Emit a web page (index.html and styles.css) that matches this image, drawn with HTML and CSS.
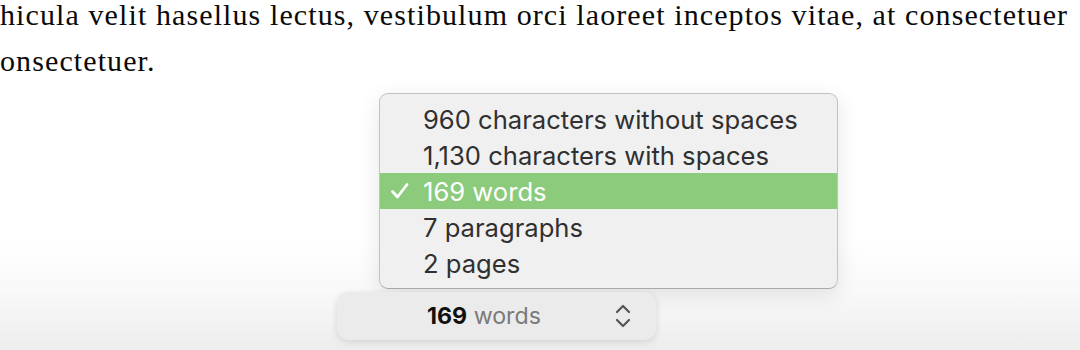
FILE: index.html
```html
<!DOCTYPE html>
<html>
<head>
<meta charset="utf-8">
<link rel="stylesheet" href="styles.css">
</head>
<body>
<div class="page">
  <div class="prose">
    <p class="line">hicula velit hasellus lectus, vestibulum orci laoreet inceptos vitae, at consectetuer</p>
    <p class="line">onsectetuer.</p>
  </div>
  <div class="popup">
    <ul class="menu">
      <li class="item">960 characters without spaces</li>
      <li class="item">1,130 characters with spaces</li>
      <li class="item selected"><svg class="check" width="20" height="18" viewBox="0 0 20 18"><path d="M2.5 9.5 L7.5 15 L17 2.5" fill="none" stroke="#fff" stroke-width="2.8" stroke-linecap="round" stroke-linejoin="round"/></svg>169 words</li>
      <li class="item">7 paragraphs</li>
      <li class="item">2 pages</li>
    </ul>
  </div>
  <div class="toolbar">
    <div class="count-button">
      <span class="count-label"><b>169</b> words</span>
      <svg class="chevrons" width="18" height="26" viewBox="0 0 18 26">
        <path d="M3 9 L9 3 L15 9" fill="none" stroke="#555" stroke-width="2.2" stroke-linecap="round" stroke-linejoin="round"/>
        <path d="M3 17 L9 23 L15 17" fill="none" stroke="#555" stroke-width="2.2" stroke-linecap="round" stroke-linejoin="round"/>
      </svg>
    </div>
  </div>
</div>
</body>
</html>
```
FILE: styles.css
```css
html, body {
  margin: 0;
  padding: 0;
}
body {
  width: 1080px;
  height: 350px;
  overflow: hidden;
  background: linear-gradient(to bottom, #ffffff 0px, #ffffff 240px, #f9f9f9 290px, #ededed 350px);
}
.page {
  display: flex;
  flex-direction: column;
}
.prose {
  display: flex;
  flex-direction: column;
  gap: 16px;
  font-family: "Liberation Serif", "Times New Roman", serif;
  font-size: 30px;
  line-height: 30px;
  letter-spacing: 1.1px;
  color: #0a0a0a;
  white-space: nowrap;
}
.line {
  margin: 0;
}
.popup {
  margin-top: 17px;
  padding-left: 379px;
}
.menu {
  list-style: none;
  margin: 0;
  width: 459px;
  height: 196px;
  box-sizing: border-box;
  padding: 7px 0;
  background: #f0f0f0;
  border: 1px solid #c2c2c2;
  border-bottom-color: #a9a9a9;
  border-radius: 9px;
  box-shadow: 0 6px 22px rgba(0, 0, 0, 0.10);
}
.item {
  position: relative;
  height: 36px;
  display: flex;
  align-items: center;
  padding-left: 43px;
  font-family: Inter, "Noto Sans", sans-serif;
  font-size: 25.6px;
  color: #303030;
}
.item.selected {
  background: #8bcb7b;
  color: #ffffff;
}
.check {
  position: absolute;
  left: 10px;
  top: 9px;
}
.toolbar {
  margin-top: 3px;
  padding-left: 337px;
}
.count-button {
  width: 319px;
  height: 48px;
  box-sizing: border-box;
  border-radius: 12px;
  background: #ebebeb;
  box-shadow: 0 2px 7px rgba(0, 0, 0, 0.12);
  display: flex;
  align-items: center;
  padding-left: 90px;
  padding-right: 24px;
}
.count-label {
  flex: 1;
  font-family: Inter, "Noto Sans", sans-serif;
  font-size: 23.2px;
  color: #7a7a7a;
}
.count-label b {
  color: #111;
  font-weight: 700;
}
.chevrons {
  display: block;
}
```
